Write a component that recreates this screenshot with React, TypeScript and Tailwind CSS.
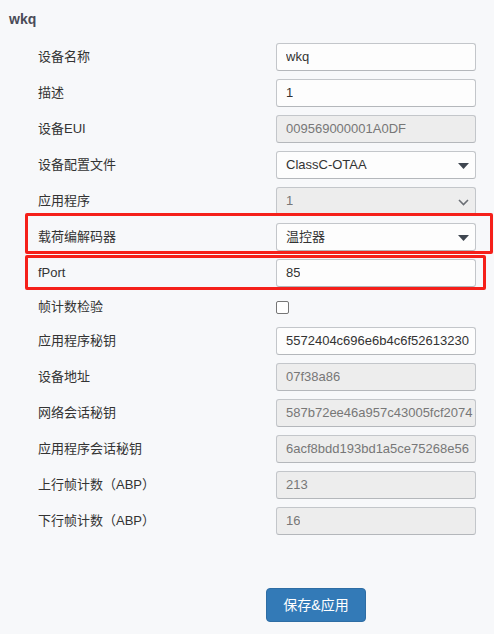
import React from "react";

const labelFont = { fontFamily: '"Liberation Sans", "Noto Sans CJK SC", sans-serif' };

function Caret() {
  return (
    <svg width="11" height="6" viewBox="0 0 11 6" className="absolute right-[6px] top-[11px]">
      <polygon points="0,0 11,0 5.5,6" fill="#3f4650" />
    </svg>
  );
}

function Chevron() {
  return (
    <svg width="11" height="7" viewBox="0 0 11 7" className="absolute right-[6px] top-[11px]">
      <polyline points="1,1 5.5,5.5 10,1" fill="none" stroke="#6b6f75" strokeWidth="1.6" />
    </svg>
  );
}

type Field =
  | { label: string; kind: "input"; value: string; disabled?: boolean }
  | { label: string; kind: "select"; value: string; disabled?: boolean }
  | { label: string; kind: "checkbox" };

function Box({ value, disabled, children }: { value: string; disabled?: boolean; children?: React.ReactNode }) {
  return (
    <div
      className={
        "relative shrink-0 w-[200px] h-[28px] rounded-[3px] border border-[#c3c6ca] border-b-[#b4b7bb] pl-[9px] flex items-center text-[13px] whitespace-nowrap overflow-hidden " +
        (disabled ? "bg-[#ededed] text-[#777]" : "bg-[#fdfdfd] text-[#333]")
      }
      style={labelFont}
    >
      <span className="overflow-hidden">{value}</span>
      {children}
    </div>
  );
}

function Row({ f }: { f: Field }) {
  if (f.kind === "checkbox") {
    return (
      <div className="flex items-center h-[24px] mb-[8px]">
        <div className="shrink-0 w-[276px] pl-[38px] text-[13px] text-[#333]" style={labelFont}>
          {f.label}
        </div>
        <div className="w-[13px] h-[13px] border border-[#767676] rounded-[2px] bg-white" />
      </div>
    );
  }
  return (
    <div className="flex items-center h-[28px] mb-[8px]">
      <div className="shrink-0 w-[276px] pl-[38px] text-[13px] text-[#333]" style={labelFont}>
        {f.label}
      </div>
      <Box value={f.value} disabled={f.disabled}>
        {f.kind === "select" ? f.disabled ? <Chevron /> : <Caret /> : null}
      </Box>
    </div>
  );
}

const fields: Field[] = [
  { label: "设备名称", kind: "input", value: "wkq" },
  { label: "描述", kind: "input", value: "1" },
  { label: "设备EUI", kind: "input", value: "009569000001A0DF", disabled: true },
  { label: "设备配置文件", kind: "select", value: "ClassC-OTAA" },
  { label: "应用程序", kind: "select", value: "1", disabled: true },
  { label: "载荷编解码器", kind: "select", value: "温控器" },
  { label: "fPort", kind: "input", value: "85" },
  { label: "帧计数检验", kind: "checkbox" },
  { label: "应用程序秘钥", kind: "input", value: "5572404c696e6b4c6f52613230" },
  { label: "设备地址", kind: "input", value: "07f38a86", disabled: true },
  { label: "网络会话秘钥", kind: "input", value: "587b72ee46a957c43005fcf2074", disabled: true },
  { label: "应用程序会话秘钥", kind: "input", value: "6acf8bdd193bd1a5ce75268e56", disabled: true },
  { label: "上行帧计数（ABP）", kind: "input", value: "213", disabled: true },
  { label: "下行帧计数（ABP）", kind: "input", value: "16", disabled: true },
];

export default function App() {
  return (
    <div className="relative w-[494px] h-[634px] bg-[#f7f8fa] overflow-hidden" style={labelFont}>
      <div className="pl-[9px] pt-[9px] h-[43px] text-[14px] font-bold text-[#4a4b57]">wkq</div>
      <div>
        {fields.map((f) => (
          <Row key={f.label} f={f} />
        ))}
      </div>
      <div className="pt-[45px] pl-[266px]">
        <button className="w-[100px] h-[34px] rounded-[4px] bg-[#337ab7] border border-[#2e6da4] text-white text-[14px]" style={labelFont}>
          保存&amp;应用
        </button>
      </div>
      {/* annotation boxes */}
      <div className="absolute left-[25px] top-[213px] w-[468px] h-[41px] border-[3px] border-[#f5201a] rounded-[2px] pointer-events-none" />
      <div className="absolute left-[25px] top-[255px] w-[461px] h-[35px] border-[3px] border-[#f5201a] rounded-[2px] pointer-events-none" />
    </div>
  );
}
